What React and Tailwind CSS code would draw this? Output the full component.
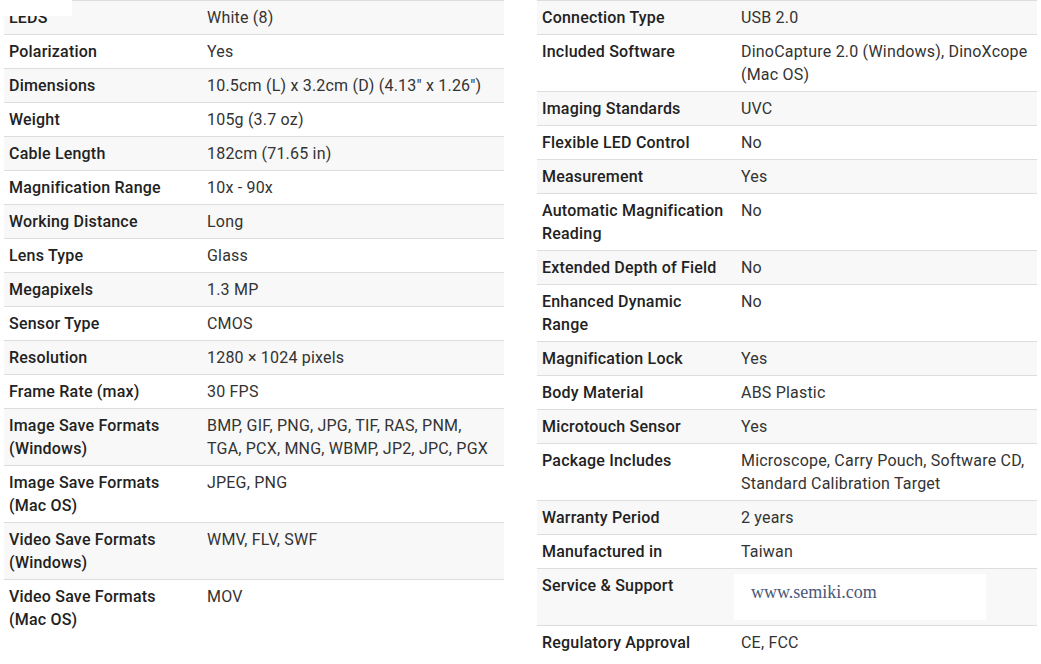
import React from "react";

const left = [
  ["LEDS", "White (8)"],
  ["Polarization", "Yes"],
  ["Dimensions", "10.5cm (L) x 3.2cm (D) (4.13\" x 1.26\")"],
  ["Weight", "105g (3.7 oz)"],
  ["Cable Length", "182cm (71.65 in)"],
  ["Magnification Range", "10x - 90x"],
  ["Working Distance", "Long"],
  ["Lens Type", "Glass"],
  ["Megapixels", "1.3 MP"],
  ["Sensor Type", "CMOS"],
  ["Resolution", "1280 × 1024 pixels"],
  ["Frame Rate (max)", "30 FPS"],
  ["Image Save Formats (Windows)", "BMP, GIF, PNG, JPG, TIF, RAS, PNM, TGA, PCX, MNG, WBMP, JP2, JPC, PGX"],
  ["Image Save Formats (Mac OS)", "JPEG, PNG"],
  ["Video Save Formats (Windows)", "WMV, FLV, SWF"],
  ["Video Save Formats (Mac OS)", "MOV"],
];

const right = [
  ["Connection Type", "USB 2.0"],
  ["Included Software", "DinoCapture 2.0 (Windows), DinoXcope (Mac OS)"],
  ["Imaging Standards", "UVC"],
  ["Flexible LED Control", "No"],
  ["Measurement", "Yes"],
  ["Automatic Magnification Reading", "No"],
  ["Extended Depth of Field", "No"],
  ["Enhanced Dynamic Range", "No"],
  ["Magnification Lock", "Yes"],
  ["Body Material", "ABS Plastic"],
  ["Microtouch Sensor", "Yes"],
  ["Package Includes", "Microscope, Carry Pouch, Software CD, Standard Calibration Target"],
  ["Warranty Period", "2 years"],
  ["Manufactured in", "Taiwan"],
  ["Service & Support", "__LOGO__"],
  ["Regulatory Approval", "CE, FCC"],
];

function Table({ rows, cols }) {
  return (
    <div className="w-[500px] border-t border-[#dddddd]">
      {rows.map(([k, v], i) => (
        <div
          key={k}
          className={`grid ${cols} ${i % 2 === 0 ? "bg-[#f8f8f8]" : "bg-white"} ${
            i < rows.length - 1 ? "border-b border-[#dddddd]" : ""
          }`}
        >
          <div className="py-[5px] pl-[5px] pr-[12px] font-medium text-[#222222]">{k}</div>
          <div className="px-[5px] py-[5px] text-[#333333]">
            {v === "__LOGO__" ? (
              <div className="-ml-[7px] flex h-[46px] w-[252px] items-start bg-white pl-[17px] pt-[7px] font-['Liberation_Serif',serif] text-[18px] leading-[22px] tracking-normal text-[#4a5878]">
                www.semiki.com
              </div>
            ) : (
              v
            )}
          </div>
        </div>
      ))}
    </div>
  );
}

export default function App() {
  return (
    <div className="relative h-[664px] w-[1041px] overflow-hidden bg-white font-['Roboto',sans-serif] text-[16px] leading-[23px] tracking-[0.2px]">
      <div className="flex gap-[33px] pl-[4px]">
        <Table rows={left} cols="grid-cols-[198px_1fr]" />
        <Table rows={right} cols="grid-cols-[199px_1fr]" />
      </div>
      <div className="absolute left-0 top-0 h-[16px] w-[72px] bg-white" />
    </div>
  );
}
